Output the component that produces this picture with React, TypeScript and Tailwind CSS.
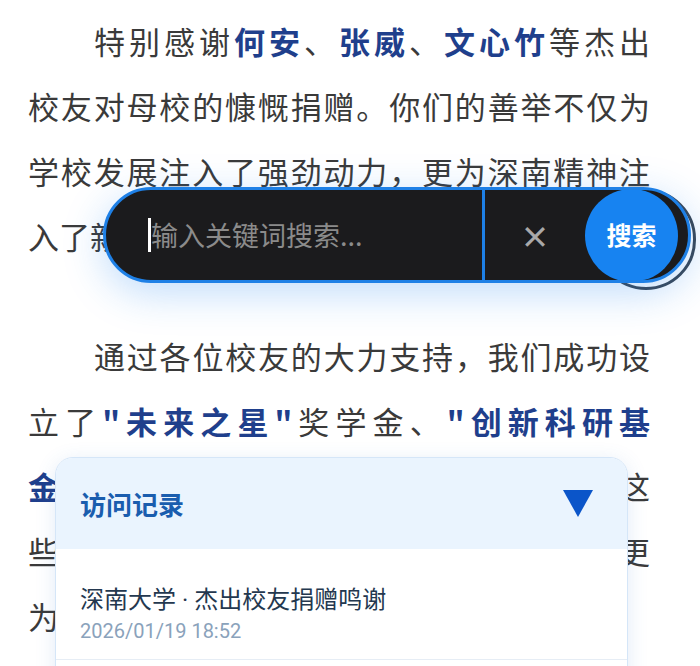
const Line = ({ children, last = false, indent = false }: { children: React.ReactNode; last?: boolean; indent?: boolean }) => (
  <div
    className={`whitespace-nowrap text-justify ${last ? '' : '[text-align-last:justify]'} ${indent ? 'pl-[66px]' : ''}`}
  >
    {children}
  </div>
);

const B = ({ children }: { children: React.ReactNode }) => (
  <span className="font-bold text-[#1f3f8c]">{children}</span>
);

const App = () => {
  return (
    <div
      className="relative h-[666px] w-[700px] overflow-hidden bg-white"
      style={{ fontFamily: '"Noto Sans CJK SC", "Noto Sans", sans-serif' }}
    >
      <div className="pl-[28px] pr-[50px] pt-[8px] text-[31px] leading-[65px] text-[#3a3a3a]">
        <div className="mb-[55px]">
          <Line indent>
            特别感谢<B>何安</B>、<B>张威</B>、<B>文心竹</B>等杰出
          </Line>
          <Line>校友对母校的慷慨捐赠。你们的善举不仅为</Line>
          <Line>学校发展注入了强劲动力，更为深南精神注</Line>
          <Line last>入了新的活力与温暖。</Line>
        </div>
        <div>
          <Line indent>通过各位校友的大力支持，我们成功设</Line>
          <Line>
            立了<B>"未来之星"</B>奖学金、<B>"创新科研基</B>
          </Line>
          <Line>
            <B>金"</B>等专项基金，已惠及上百名优秀学子。这
          </Line>
          <Line>些善举激励着一代代深南学子奋发向上，更</Line>
          <Line last>为深南大学的长远发展奠定了坚实的基础。</Line>
        </div>
      </div>

      {/* search bar */}
      <div className="absolute left-[596px] top-[189px] h-[101px] w-[100px] rounded-full border-[3px] border-[#3a4552]" />
      <div className="absolute left-[103px] top-[187px] flex h-[96px] w-[588px] items-center overflow-hidden rounded-full border-[3px] border-[#1e80e6] bg-[#1b1b1d] shadow-[0_10px_40px_rgba(30,128,240,0.28)]">
        <div className="flex h-full w-[376px] items-center pl-[42px]">
          <span className="h-[34px] w-[3px] bg-white" />
          <span className="text-[27px] text-[#8b8b8b]">输入关键词搜索...</span>
        </div>
        <div className="h-full w-[3px] bg-[#1e80e6]" />
        <div className="flex h-full w-[100px] items-center justify-center text-[30px] leading-none font-bold text-[#a9a9a9]">
          ×
        </div>
        <div className="flex h-[93px] w-[93px] items-center justify-center rounded-full bg-[#1783f1] text-[25px] font-bold text-white">
          搜索
        </div>
      </div>

      {/* history card */}
      <div className="absolute left-[55px] top-[457px] w-[573px] overflow-hidden rounded-[18px] border border-[#d5e6f8] bg-white shadow-[0_4px_20px_rgba(60,120,200,0.15)]">
        <div className="flex h-[91px] items-center justify-between bg-[#eaf4fe] pl-[24px] pr-[34px]">
          <span className="text-[26px] font-bold text-[#1a5dae]">访问记录</span>
          <svg width="30" height="28" viewBox="0 0 30 28">
            <polygon points="0,0 30,0 15,27" fill="#0b55c9" />
          </svg>
        </div>
        <div className="border-b border-[#e6edf5] pb-[14px] pl-[24px] pt-[33px]">
          <div className="text-[24px] leading-[32px] text-[#24384f]">
            深南大学<span style={{ fontFamily: 'Roboto, sans-serif' }}> · </span>杰出校友捐赠鸣谢
          </div>
          <div
            className="mt-[1px] text-[20px] leading-[28px] text-[#8aa2bb]"
            style={{ fontFamily: 'Roboto, "Noto Sans CJK SC", sans-serif' }}
          >
            2026/01/19 18:52
          </div>
        </div>
        <div className="h-[40px]" />
      </div>
    </div>
  );
};

export default App;
